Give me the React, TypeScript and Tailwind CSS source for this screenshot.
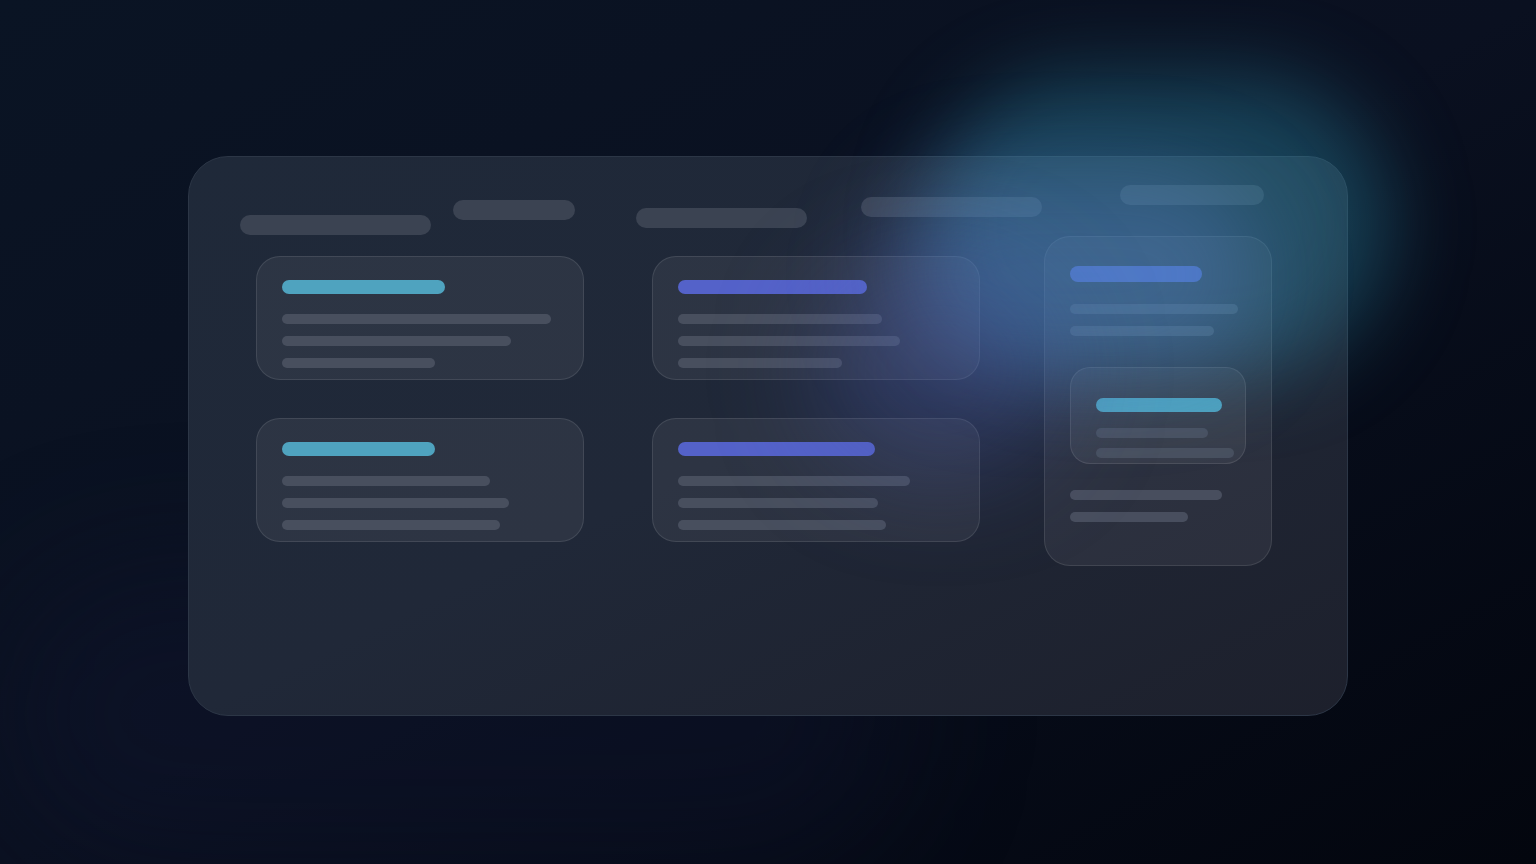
const topBars = [
  { w: 'w-[191px]', cls: 'mt-[30px] ml-0' },
  { w: 'w-[122px]', cls: 'mt-[15px] ml-[22px]' },
  { w: 'w-[171px]', cls: 'mt-[23px] ml-[61px]' },
  { w: 'w-[181px]', cls: 'mt-[12px] ml-[54px]' },
  { w: 'w-[144px]', cls: 'mt-0 ml-[78px]' },
];

const cards = [
  { accent: 'bg-[#4fa3bf]', title: 'w-[163px]', lines: ['w-[269px]', 'w-[229px]', 'w-[153px]'] },
  { accent: 'bg-[#5462c9]', title: 'w-[189px]', lines: ['w-[204px]', 'w-[222px]', 'w-[164px]'] },
  { accent: 'bg-[#4fa3bf]', title: 'w-[153px]', lines: ['w-[208px]', 'w-[227px]', 'w-[218px]'] },
  { accent: 'bg-[#5462c9]', title: 'w-[197px]', lines: ['w-[232px]', 'w-[200px]', 'w-[208px]'] },
];

function Line({ w, className = '' }: { w: string; className?: string }) {
  return <div className={`h-[10px] rounded-full bg-[#4b5262]/90 ${w} ${className}`} />;
}

function Card({ accent, title, lines }: { accent: string; title: string; lines: string[] }) {
  return (
    <div className="box-border h-[124px] w-[328px] rounded-[24px] border border-white/10 bg-white/[0.06] px-[25px] pt-[23px]">
      <div className={`h-[14px] rounded-full ${accent} ${title}`} />
      <div className="mt-[20px] flex flex-col gap-[12px]">
        {lines.map((l, i) => (
          <Line key={i} w={l} />
        ))}
      </div>
    </div>
  );
}

function SideCard() {
  return (
    <div className="ml-[64px] box-border h-[330px] w-[228px] rounded-[26px] border border-white/10 bg-white/[0.06] px-[25px] pt-[29px]">
      <div className="h-[16px] w-[132px] rounded-full bg-[#5462c9]" />
      <Line w="w-[168px]" className="mt-[22px]" />
      <Line w="w-[144px]" className="mt-[12px]" />
      <div className="mt-[31px] box-border h-[97px] w-[176px] rounded-[20px] border border-white/10 bg-white/[0.06] pl-[25px] pt-[30px]">
        <div className="h-[14px] w-[126px] rounded-full bg-[#4fa3bf]" />
        <Line w="w-[112px]" className="mt-[16px]" />
        <Line w="w-[138px]" className="mt-[10px]" />
      </div>
      <Line w="w-[152px]" className="mt-[26px]" />
      <Line w="w-[118px]" className="mt-[12px]" />
    </div>
  );
}

export default function App() {
  return (
    <div className="relative h-[864px] w-[1536px] overflow-hidden bg-gradient-to-br from-[#0a1424] via-[#0a1020] to-[#03060e]">
      <div className="pointer-events-none absolute bottom-0 left-0 h-[300px] w-[900px] rounded-full bg-[#10142e]/40 blur-3xl" />

      <div className="pt-[156px]">
        <div className="relative mx-auto box-border h-[560px] w-[1160px] rounded-[40px] border border-[#2c3646] bg-gradient-to-br from-[#1f2939] via-[#202838] to-[#1d202c]">
          <div className="flex items-start pl-[51px] pt-[28px]">
            {topBars.map((b, i) => (
              <div key={i} className={`h-[20px] rounded-full bg-[#3b4352] ${b.w} ${b.cls}`} />
            ))}
          </div>
          <div className="mt-[1px] flex items-start pl-[67px]">
            <div className="mt-[20px] grid grid-cols-2 gap-x-[68px] gap-y-[38px]">
              {cards.map((c, i) => (
                <Card key={i} {...c} />
              ))}
            </div>
            <SideCard />
          </div>
        </div>
      </div>

      {/* glows over the glass panel */}
      <div className="pointer-events-none absolute left-[930px] top-[75px] h-[300px] w-[460px] rounded-full bg-[#2a8aa8]/40 blur-[40px]" />
      <div className="pointer-events-none absolute left-[880px] top-[170px] h-[210px] w-[380px] rounded-full bg-[#6a8ae0]/30 blur-[45px]" />
      <div className="pointer-events-none absolute left-[810px] top-[260px] h-[220px] w-[260px] rounded-full bg-[#4a58a8]/30 blur-[50px]" />
    </div>
  );
}
